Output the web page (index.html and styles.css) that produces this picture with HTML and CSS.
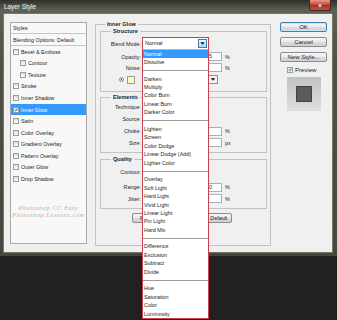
FILE: index.html
```html
<!DOCTYPE html>
<html lang="en">
<head>
    <meta charset="UTF-8">
    <meta name="viewport" content="width=device-width, initial-scale=1.0">
    <title>Layer Style</title>
    <link rel="stylesheet" href="styles.css">
</head>
<body>
    <div class="window">
        <div class="titlebar">
            <span class="title">Layer Style</span>
            <span class="close">x</span>
        </div>
        <div class="client">
            <!-- left: list of effects -->
            <div class="styles-list">
                <div class="list-head">Styles</div>
                <div class="list-blend">Blending Options: Default</div>
                <div class="list-item"><span class="cb"></span>Bevel &amp; Emboss</div>
                <div class="list-item sub"><span class="cb"></span>Contour</div>
                <div class="list-item sub"><span class="cb"></span>Texture</div>
                <div class="list-item"><span class="cb"></span>Stroke</div>
                <div class="list-item"><span class="cb"></span>Inner Shadow</div>
                <div class="list-item on"><span class="cb"><svg viewBox="0 0 6 6"><path d="M1 3.2 L2.5 4.6 L5 1.2"/></svg></span>Inner Glow</div>
                <div class="list-item"><span class="cb"></span>Satin</div>
                <div class="list-item"><span class="cb"></span>Color Overlay</div>
                <div class="list-item"><span class="cb"></span>Gradient Overlay</div>
                <div class="list-item"><span class="cb"></span>Pattern Overlay</div>
                <div class="list-item"><span class="cb"></span>Outer Glow</div>
                <div class="list-item"><span class="cb"></span>Drop Shadow</div>
                <div class="watermark">Photoshop CC Easy<br>Photoshop.Lessons.com</div>
            </div>

            <!-- middle: inner glow settings -->
            <div class="center">
                <fieldset class="group outer">
                    <legend>Inner Glow</legend>

                    <fieldset class="group inner structure">
                        <legend>Structure</legend>
                        <div class="row tall">
                            <label>Blend Mode:</label>
                            <div class="blend">
                                <div class="popup">
                                    <div class="popup-face">
                                        <span>Normal</span>
                                        <span class="arrow-btn"><svg viewBox="0 0 8 8"><path d="M1.5 2.5 H6.5 L4 5.5 Z"/></svg></span>
                                    </div>
                                    <ul class="popup-list">
                                        <li class="hl">Normal</li>
                                        <li>Dissolve</li>
                                        <li class="sep"></li>
                                        <li>Darken</li>
                                        <li>Multiply</li>
                                        <li>Color Burn</li>
                                        <li>Linear Burn</li>
                                        <li>Darker Color</li>
                                        <li class="sep"></li>
                                        <li>Lighten</li>
                                        <li>Screen</li>
                                        <li>Color Dodge</li>
                                        <li>Linear Dodge (Add)</li>
                                        <li>Lighter Color</li>
                                        <li class="sep"></li>
                                        <li>Overlay</li>
                                        <li>Soft Light</li>
                                        <li>Hard Light</li>
                                        <li>Vivid Light</li>
                                        <li>Linear Light</li>
                                        <li>Pin Light</li>
                                        <li>Hard Mix</li>
                                        <li class="sep"></li>
                                        <li>Difference</li>
                                        <li>Exclusion</li>
                                        <li>Subtract</li>
                                        <li>Divide</li>
                                        <li class="sep"></li>
                                        <li>Hue</li>
                                        <li>Saturation</li>
                                        <li>Color</li>
                                        <li>Luminosity</li>
                                    </ul>
                                </div>
                            </div>
                        </div>
                        <div class="row gap1">
                            <label>Opacity:</label>
                            <span class="slider"></span>
                            <span class="field">75</span>
                            <span class="unit">%</span>
                        </div>
                        <div class="row">
                            <label>Noise:</label>
                            <span class="slider"></span>
                            <span class="field">0</span>
                            <span class="unit">%</span>
                        </div>
                        <div class="row colors">
                            <span class="radio on"></span>
                            <span class="color-chip"></span>
                            <span class="radio"></span>
                            <span class="grad"></span>
                            <span class="grad-arrow"><svg viewBox="0 0 8 8"><path d="M1.5 2.5 H6.5 L4 5.5 Z"/></svg></span>
                        </div>
                    </fieldset>

                    <fieldset class="group inner elements">
                        <legend>Elements</legend>
                        <div class="row tall">
                            <label>Technique:</label>
                            <span class="select"></span>
                        </div>
                        <div class="row tall">
                            <label>Source:</label>
                            <span class="radio"></span>
                        </div>
                        <div class="row tall">
                            <label>Choke:</label>
                            <span class="slider"></span>
                            <span class="field">0</span>
                            <span class="unit">%</span>
                        </div>
                        <div class="row">
                            <label>Size:</label>
                            <span class="slider"></span>
                            <span class="field">5</span>
                            <span class="unit">px</span>
                        </div>
                    </fieldset>

                    <fieldset class="group inner quality">
                        <legend>Quality</legend>
                        <div class="row contour">
                            <label>Contour:</label>
                            <span class="contour-thumb"></span>
                        </div>
                        <div class="row tall">
                            <label>Range:</label>
                            <span class="slider"></span>
                            <span class="field">50</span>
                            <span class="unit">%</span>
                        </div>
                        <div class="row">
                            <label>Jitter:</label>
                            <span class="slider"></span>
                            <span class="field">0</span>
                            <span class="unit">%</span>
                        </div>
                    </fieldset>

                    <div class="defaults">
                        <span class="btn wide">Make Default</span>
                        <span class="btn wide">Reset to Default</span>
                    </div>
                </fieldset>
            </div>

            <!-- right: buttons and preview -->
            <div class="actions">
                <span class="btn default">OK</span>
                <span class="btn">Cancel</span>
                <span class="btn">New Style...</span>
                <div class="preview-check">
                    <span class="cb"><svg viewBox="0 0 6 6"><path d="M1 3.2 L2.5 4.6 L5 1.2"/></svg></span>Preview
                </div>
                <div class="preview-box"><span class="preview-swatch"></span></div>
            </div>
        </div>
    </div>
</body>
</html>
```

FILE: styles.css
```css
body {
    margin: 0;
    width: 337px;
    height: 320px;
    overflow: hidden;
    background: #212121;
    font-family: "Liberation Sans", Tahoma, Arial, sans-serif;
    font-size: 5.4px;
    color: #1e1e1e;
}

.window {
    padding: 0 4px 3px 3px;
    background: linear-gradient(#2f302a, #5e6054 10px, #505247 60px, #45473d);
}

.titlebar {
    height: 13px;
    display: flex;
    justify-content: space-between;
    align-items: flex-start;
}

.title {
    margin: 3px 0 0 1px;
    font-size: 6.4px;
    color: #eceee4;
    text-shadow: 0 0 3px rgba(255, 255, 255, 0.35);
}

.close {
    width: 22px;
    height: 11px;
    margin-right: 2px;
    box-sizing: border-box;
    border: 1px solid #3b2b24;
    border-top: none;
    border-radius: 0 0 3px 3px;
    background: linear-gradient(#e39a8e, #cc4b3a 45%, #b0301f 55%, #c9553f);
    color: #fff;
    font-weight: bold;
    font-size: 6px;
    display: flex;
    justify-content: center;
    align-items: center;
}

.client {
    height: 240px;
    box-sizing: border-box;
    display: flex;
    padding: 8px 5px 8px 6px;
    background: #f0f0f0;
    border: 1px solid #75776b;
}

/* ---- left list ---- */

.styles-list {
    width: 77px;
    flex: none;
    box-sizing: border-box;
    border: 1px solid #a9a9a9;
    background: #f8f8f8;
    display: flex;
    flex-direction: column;
}

.list-head,
.list-blend {
    display: flex;
    align-items: center;
    padding-left: 2px;
    border-bottom: 1px solid #c6c6c6;
}

.list-head { height: 10px; }
.list-blend { height: 11px; }

.list-item {
    height: 11.55px;
    display: flex;
    align-items: center;
    padding-left: 2px;
}

.list-item.sub { padding-left: 9px; }

.list-item.on {
    background: #3399ff;
    color: #fff;
}

.cb {
    width: 4px;
    height: 4px;
    flex: none;
    margin-right: 2px;
    border: 1px solid #9c9c9c;
    background: linear-gradient(#dddddd, #ffffff);
    display: flex;
}

.cb svg {
    width: 100%;
    height: 100%;
    fill: none;
    stroke: #2a2a2a;
    stroke-width: 1.2;
}

.watermark {
    margin-top: auto;
    padding-bottom: 24px;
    text-align: center;
    font-family: "Liberation Serif", serif;
    font-style: italic;
    font-size: 6px;
    line-height: 7px;
    letter-spacing: 0.7px;
    color: #b0b0b0;
}

/* ---- center settings ---- */

.center {
    width: 176px;
    flex: none;
    margin: -1px 9px 0 8px;
}

.group {
    margin: 0;
    min-width: 0;
    border: 1px solid #c2c2c2;
}

.group legend {
    font-weight: bold;
    font-size: 5.6px;
    line-height: 7px;
    padding: 0 2px;
}

.outer {
    height: 225px;
    box-sizing: border-box;
    padding: 0 3px 0 4px;
}

.outer > legend { margin-left: 5px; }

.inner { padding: 0 1px; }
.inner > legend { margin-left: 9px; }

.structure { padding-top: 3px; padding-bottom: 5px; }
.elements { margin-top: 1.5px; padding-top: 0.5px; padding-bottom: 4px; }
.quality { margin-top: 3px; padding-bottom: 4px; }

.row {
    height: 11px;
    display: flex;
    align-items: center;
}

.row.tall { height: 12px; }
.row.gap1 { margin-top: 1px; }
.row.colors { height: 13px; }
.row.contour { height: 18px; }

.row label {
    width: 39px;
    flex: none;
    margin-right: 2px;
    text-align: right;
}

.slider {
    width: 56px;
    height: 3px;
    flex: none;
    box-sizing: border-box;
    margin-right: 4px;
    border: 1px solid #9d9d9d;
    background: #d8d8d8;
}

.field {
    width: 19px;
    height: 9px;
    flex: none;
    box-sizing: border-box;
    padding-left: 2px;
    border: 1px solid #a9b0b8;
    background: #fff;
    line-height: 7px;
}

.unit { margin-left: 3px; }

.radio {
    width: 5px;
    height: 5px;
    flex: none;
    box-sizing: border-box;
    border: 1px solid #8a8a8a;
    border-radius: 50%;
    background: #fff;
}

.radio.on {
    background: radial-gradient(#2c2c2c 40%, #e8e8e8 45%);
}

.colors .radio.on { margin-left: 17px; }

.color-chip {
    width: 8px;
    height: 8px;
    margin-left: 3px;
    box-sizing: border-box;
    border: 1px solid #9a9a9a;
    background: #fbfbc4;
}

.colors .radio:not(.on) { margin-left: 9px; }

.grad {
    width: 57px;
    height: 9px;
    margin-left: 2px;
    background: linear-gradient(90deg, #fbfbc4, #f0f0f0);
}

.grad-arrow {
    width: 10px;
    height: 9px;
    box-sizing: border-box;
    border: 1px solid #8f8f8f;
    background: #f4f4f4;
    display: flex;
}

.grad-arrow svg,
.arrow-btn svg {
    width: 100%;
    height: 100%;
    fill: #111;
}

.select {
    width: 55px;
    height: 10px;
    box-sizing: border-box;
    border: 1px solid #a0a0a0;
    background: #fff;
}

.contour-thumb {
    width: 16px;
    height: 16px;
    border: 1px solid #8c8c8c;
    background: linear-gradient(135deg, #fff 50%, #333 51%);
}

.defaults {
    display: flex;
    justify-content: center;
    gap: 4px;
    margin-top: 4px;
    padding-right: 3px;
}

/* ---- blend mode popup (open) ---- */

.blend {
    position: relative;
    width: 65px;
    height: 12px;
}

.popup {
    position: absolute;
    top: -1px;
    left: -1px;
    width: 65px;
    z-index: 2;
    border: 1px solid #c9404e;
    background: #fff;
}

.popup-face {
    height: 11.5px;
    box-sizing: border-box;
    display: flex;
    justify-content: space-between;
    align-items: center;
    padding-left: 2px;
    border-bottom: 1px solid #b9b9b9;
}

.arrow-btn {
    width: 9px;
    height: 9px;
    box-sizing: border-box;
    margin-right: 1px;
    border: 1px solid #3c7fb1;
    background: linear-gradient(#eaf6fd, #a9dbf6);
    display: flex;
}

.popup-list {
    list-style: none;
    margin: 0;
    padding: 0;
}

.popup-list li {
    height: 8.4px;
    line-height: 8.4px;
    padding-left: 1px;
    white-space: nowrap;
}

.popup-list li.hl {
    background: #3399ff;
    color: #fff;
}

.popup-list li.sep {
    background: linear-gradient(#9a9a9a, #9a9a9a) no-repeat center / 100% 1px;
}

/* ---- right column ---- */

.actions {
    width: 47px;
    flex: none;
    display: flex;
    flex-direction: column;
}

.btn {
    height: 10px;
    box-sizing: border-box;
    display: flex;
    justify-content: center;
    align-items: center;
    border: 1px solid #8b8b8b;
    border-radius: 2px;
    background: linear-gradient(#f6f6f6, #eaeaea 50%, #dcdcdc 51%, #d0d0d0);
    font-size: 6px;
}

.btn.wide {
    width: 48px;
    font-size: 5.4px;
}

.actions .btn + .btn { margin-top: 5px; }

.btn.default {
    border-color: #3c7fb1;
    box-shadow: inset 0 0 0 1px #c2e6fa;
}

.preview-check {
    height: 7px;
    margin: 4px 0 0 7px;
    display: flex;
    align-items: center;
    font-size: 6px;
}

.preview-check .cb { margin-right: 2px; }

.preview-box {
    width: 34px;
    height: 34px;
    margin: 4px 0 0 7px;
    display: flex;
    justify-content: center;
    align-items: center;
    background: linear-gradient(#c2c2c2, #dedede);
}

.preview-swatch {
    width: 16px;
    height: 16px;
    box-sizing: border-box;
    border: 1px solid #444;
    background: #5a5a5a;
}
```
